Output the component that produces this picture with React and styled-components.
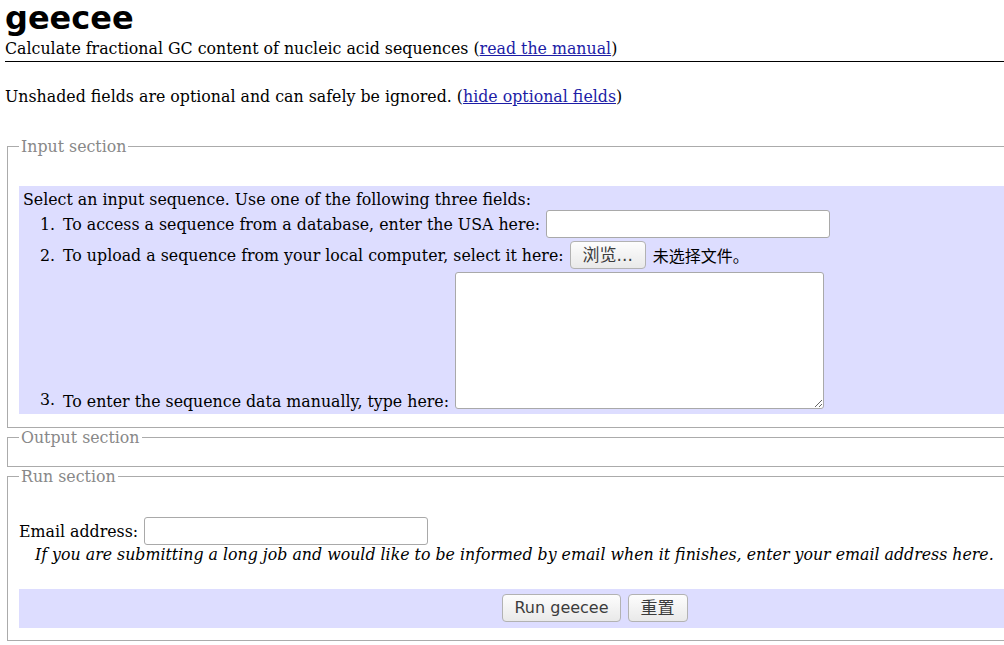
import React from "react";
import styled, { createGlobalStyle } from "styled-components";

const GlobalStyle = createGlobalStyle`
  html, body {
    margin: 0;
    padding: 0;
    overflow: hidden;
    background: #ffffff;
  }
  body {
    font-family: "DejaVu Serif", serif;
    font-size: 15.8px;
    color: #000;
  }
`;

const Page = styled.div`
  width: 1180px;
  padding: 0 0 0 5px;
`;

const Header = styled.header`
  border-bottom: 1px solid #000;
  padding-bottom: 3px;
`;

const Title = styled.h1`
  margin: 0;
  font-family: "DejaVu Sans", sans-serif;
  font-weight: bold;
  font-size: 32px;
  line-height: 37px;
`;

const Subtitle = styled.div`
  margin-top: 2px;
  line-height: 19px;
`;

const Link = styled.a`
  color: #1c1ca6;
  text-decoration: underline;
`;

const Note = styled.p`
  margin: 25px 0 31px;
  line-height: 19px;
`;

const Form = styled.form`
  display: flex;
  flex-direction: column;
`;

const Section = styled.fieldset`
  margin: 0 2px;
  padding: 6px 11px ${(p) => p.$bottom ?? 13}px;
  border: 1px solid #ababab;
  min-width: 0;
`;

const Legend = styled.legend`
  padding: 0 2px;
  color: #888888;
  line-height: 19px;
`;

const Shaded = styled.div`
  background: #ddddff;
  margin-top: ${(p) => p.$top ?? 0}px;
  padding: ${(p) => p.$pad};
`;

const Prompt = styled.div`
  line-height: 19px;
`;

const Steps = styled.ol`
  list-style: none;
  margin: 0;
  padding: 0;
  display: flex;
  flex-direction: column;
  gap: 1px;
`;

const Step = styled.li`
  display: flex;
  align-items: ${(p) => p.$align ?? "center"};
  padding: 1px 0;
  line-height: 19px;
`;

const Num = styled.span`
  width: 40px;
  box-sizing: border-box;
  text-align: right;
  padding-right: 8px;
  flex: none;
`;

const StepLabel = styled.span`
  margin-right: 6px;
  white-space: nowrap;
  margin-bottom: ${(p) => p.$lift ?? 0}px;
`;

const TextInput = styled.input`
  box-sizing: border-box;
  width: ${(p) => p.$w}px;
  height: 28px;
  border: 1px solid #a9a9a9;
  border-radius: 3px;
  background: #fff;
  padding: 2px 4px;
  font-family: "DejaVu Sans", sans-serif;
  font-size: 14px;
  outline: none;
`;

const TextArea = styled.textarea`
  box-sizing: border-box;
  width: 369px;
  height: 137px;
  border: 1px solid #a9a9a9;
  border-radius: 3px;
  background: #fff;
  margin: 0;
  padding: 2px;
  font-family: "DejaVu Sans Mono", monospace;
  font-size: 13px;
  outline: none;
`;

const Button = styled.button`
  box-sizing: border-box;
  height: 28px;
  padding: 0 ${(p) => p.$px ?? 11}px;
  border: 1px solid #b2b2b2;
  border-radius: 4px;
  background: linear-gradient(#fdfdfd, #e9e9e9);
  color: #3c3c3c;
  font-family: "DejaVu Sans", "Noto Sans CJK SC", sans-serif;
  font-size: ${(p) => p.$fs ?? 16}px;
  line-height: 26px;
  cursor: pointer;
`;

const FileName = styled.span`
  margin-left: 7px;
  font-family: "Noto Sans CJK SC", sans-serif;
  font-size: 16px;
`;

const EmailRow = styled.div`
  display: flex;
  align-items: center;
  margin-top: 25px;
  line-height: 19px;
`;

const EmailLabel = styled.label`
  margin-right: 6px;
`;

const Hint = styled.div`
  font-style: italic;
  line-height: 19px;
  padding-left: 16px;
  white-space: nowrap;
`;

const ButtonBar = styled.div`
  display: flex;
  justify-content: center;
  gap: 7px;
`;

export default function App() {
  return (
    <>
      <GlobalStyle />
      <Page>
        <Header>
          <Title>geecee</Title>
          <Subtitle>
            Calculate fractional GC content of nucleic acid sequences (
            <Link href="#">read the manual</Link>)
          </Subtitle>
        </Header>
        <Note>
          Unshaded fields are optional and can safely be ignored. (
          <Link href="#">hide optional fields</Link>)
        </Note>
        <Form onSubmit={(e) => e.preventDefault()}>
          <Section>
            <Legend>Input section</Legend>
            <Shaded $top={24} $pad="4px 0 4px 4px">
              <Prompt>
                Select an input sequence. Use one of the following three
                fields:
              </Prompt>
              <Steps>
                <Step>
                  <Num>1.</Num>
                  <StepLabel>
                    To access a sequence from a database, enter the USA here:
                  </StepLabel>
                  <TextInput type="text" $w={284} />
                </Step>
                <Step>
                  <Num>2.</Num>
                  <StepLabel>
                    To upload a sequence from your local computer, select it
                    here:
                  </StepLabel>
                  <Button type="button" $px={12} $fs={17}>
                    浏览...
                  </Button>
                  <FileName>未选择文件。</FileName>
                </Step>
                <Step $align="flex-end">
                  <Num>3.</Num>
                  <StepLabel $lift={-2}>
                    To enter the sequence data manually, type here:
                  </StepLabel>
                  <TextArea />
                </Step>
              </Steps>
            </Shaded>
          </Section>
          <Section>
            <Legend>Output section</Legend>
          </Section>
          <Section $bottom={12}>
            <Legend>Run section</Legend>
            <EmailRow>
              <EmailLabel>Email address:</EmailLabel>
              <TextInput type="text" $w={284} />
            </EmailRow>
            <Hint>
              If you are submitting a long job and would like to be informed by
              email when it finishes, enter your email address here.
            </Hint>
            <Shaded $top={25} $pad="5px 0 6px">
              <ButtonBar>
                <Button type="submit">Run geecee</Button>
                <Button type="reset" $px={12} $fs={17}>
                  重置
                </Button>
              </ButtonBar>
            </Shaded>
          </Section>
        </Form>
      </Page>
    </>
  );
}
